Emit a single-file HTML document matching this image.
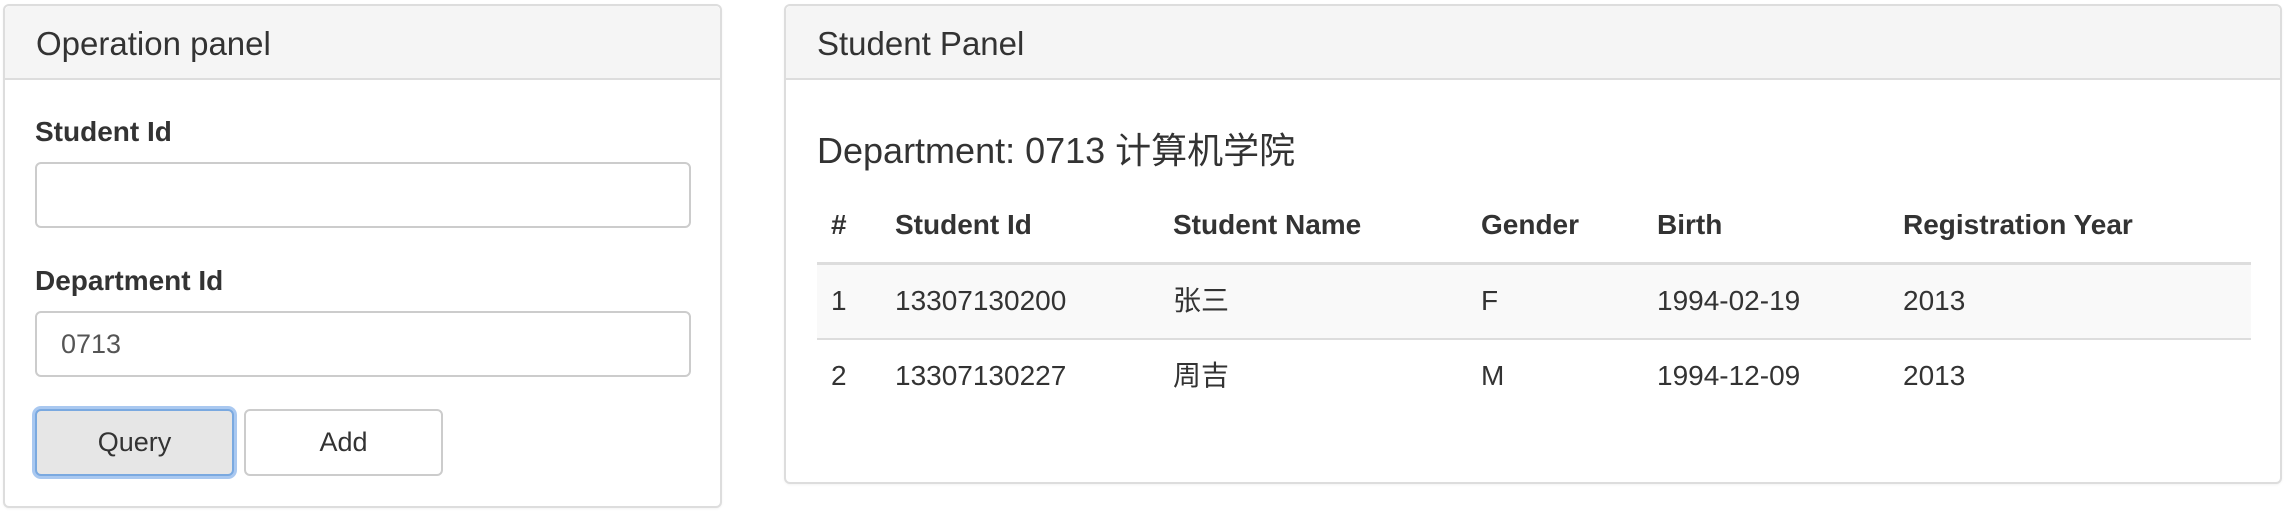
<!DOCTYPE html>
<html><head><meta charset="utf-8"><style>
body{margin:0;width:2290px;height:518px;background:#fff;font-family:"Liberation Sans","Noto Sans CJK SC",sans-serif;color:#333;position:relative;overflow:hidden}
.abs{position:absolute}
.panel{position:absolute;border:2px solid #ddd;border-radius:6px;background:#fff;box-shadow:0 1px 2px rgba(0,0,0,.05)}
.ph{position:absolute;left:0;right:0;top:0;height:72px;background:#f5f5f5;border-bottom:2px solid #ddd;border-radius:5px 5px 0 0}
.ph span{position:absolute;top:19px;font-size:33px}
.lbl{position:absolute;font-weight:bold;font-size:28px;left:30px}
.inp{position:absolute;left:30px;width:656px;height:66px;border:2px solid #ccc;border-radius:6px;box-sizing:border-box;font-size:27px;line-height:62px;padding-left:24px;color:#555}
.btn{position:absolute;height:67px;width:199px;box-sizing:border-box;border:2px solid #ccc;border-radius:6px;font-size:27px;text-align:center;line-height:63px}
.t{position:absolute;font-size:28px;line-height:30px}
.b{font-weight:bold}
</style></head><body>
<div class="panel" style="left:3px;top:4px;width:715px;height:500px">
 <div class="ph"><span style="left:31px">Operation panel</span></div>
 <div class="lbl" style="top:110px">Student Id</div>
 <div class="inp" style="top:156px"></div>
 <div class="lbl" style="top:259px">Department Id</div>
 <div class="inp" style="top:305px">0713</div>
 <div class="btn" style="left:30px;top:403px;background:#e6e6e6;border-color:#7aa9e0;box-shadow:0 0 0 3px #a9c8f0">Query</div>
 <div class="btn" style="left:239px;top:403px;background:#fff">Add</div>
</div>
<div class="panel" style="left:784px;top:4px;width:1494px;height:476px">
 <div class="ph"><span style="left:31px">Student Panel</span></div>
 <div class="abs" style="left:31px;top:116px;font-size:36px">Department: 0713 计算机学院</div>
 <div class="abs" style="left:31px;top:256px;width:1434px;height:3px;background:#ddd"></div>
 <div class="abs" style="left:31px;top:259px;width:1434px;height:73px;background:#f9f9f9"></div>
 <div class="abs" style="left:31px;top:332px;width:1434px;height:2px;background:#ddd"></div>
</div>
<div class="t b" style="left:831px;top:210px">#</div>
<div class="t b" style="left:895px;top:210px">Student Id</div>
<div class="t b" style="left:1173px;top:210px">Student Name</div>
<div class="t b" style="left:1481px;top:210px">Gender</div>
<div class="t b" style="left:1657px;top:210px">Birth</div>
<div class="t b" style="left:1903px;top:210px">Registration Year</div>
<div class="t" style="left:831px;top:286px">1</div>
<div class="t" style="left:895px;top:286px">13307130200</div>
<div class="t" style="left:1173px;top:286px">张三</div>
<div class="t" style="left:1481px;top:286px">F</div>
<div class="t" style="left:1657px;top:286px">1994-02-19</div>
<div class="t" style="left:1903px;top:286px">2013</div>
<div class="t" style="left:831px;top:361px">2</div>
<div class="t" style="left:895px;top:361px">13307130227</div>
<div class="t" style="left:1173px;top:361px">周吉</div>
<div class="t" style="left:1481px;top:361px">M</div>
<div class="t" style="left:1657px;top:361px">1994-12-09</div>
<div class="t" style="left:1903px;top:361px">2013</div>
</body></html>
